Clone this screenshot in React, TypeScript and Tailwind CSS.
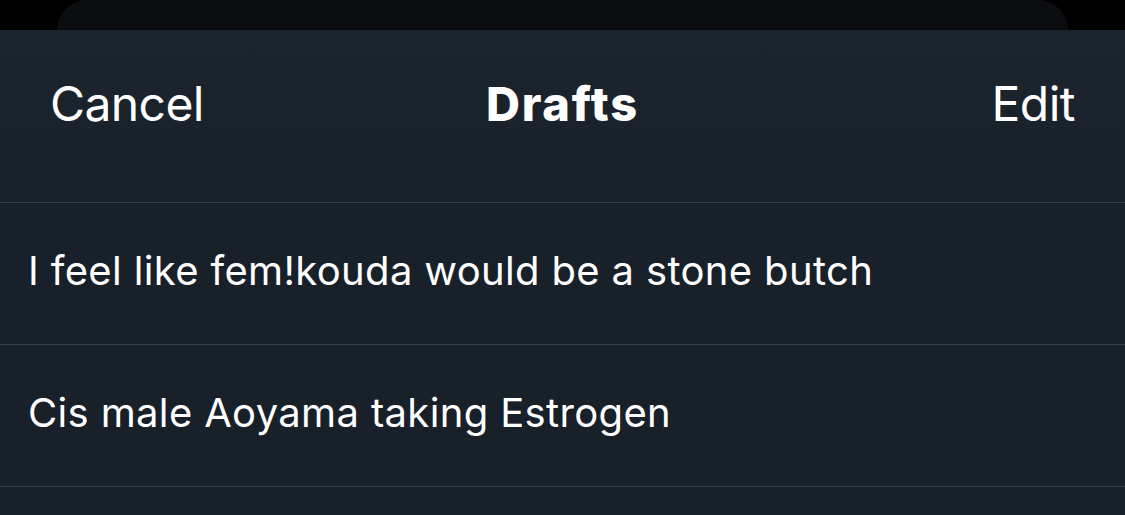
import React from 'react';

const drafts = [
  'I feel like fem!kouda would be a stone butch',
  'Cis male Aoyama taking Estrogen',
];

export default function App() {
  return (
    <div
      className="h-[515px] w-[1125px] overflow-hidden bg-black flex flex-col"
      style={{ fontFamily: 'Inter, "Noto Sans", sans-serif' }}
    >
      {/* card behind the sheet */}
      <div className="mx-[57px] h-[30px] shrink-0 rounded-t-[56px] bg-[#0b0d11]" />

      {/* Sheet */}
      <div className="flex-1 rounded-t-[38px] bg-[#18202a] text-white">
        <div className="grid h-[173px] grid-cols-3 items-center border-b border-[#363d46] bg-gradient-to-b from-[#1c242e] to-[#18202a] px-[50px] pb-[24px]">
          <button type="button" className="justify-self-start text-[48px] font-normal tracking-[-0.6px]">
            Cancel
          </button>
          <h1 className="justify-self-center text-[47px] font-extrabold tracking-[1.8px]">Drafts</h1>
          <button type="button" className="justify-self-end text-[48px] font-normal tracking-[-0.5px]">
            Edit
          </button>
        </div>

        {drafts.map(text => (
          <div
            key={text}
            className="flex h-[142px] items-center border-b border-[#363d46] px-[28px] pb-[5px]"
          >
            <p className="text-[40px] tracking-[0.35px]">{text}</p>
          </div>
        ))}
      </div>
    </div>
  );
}
